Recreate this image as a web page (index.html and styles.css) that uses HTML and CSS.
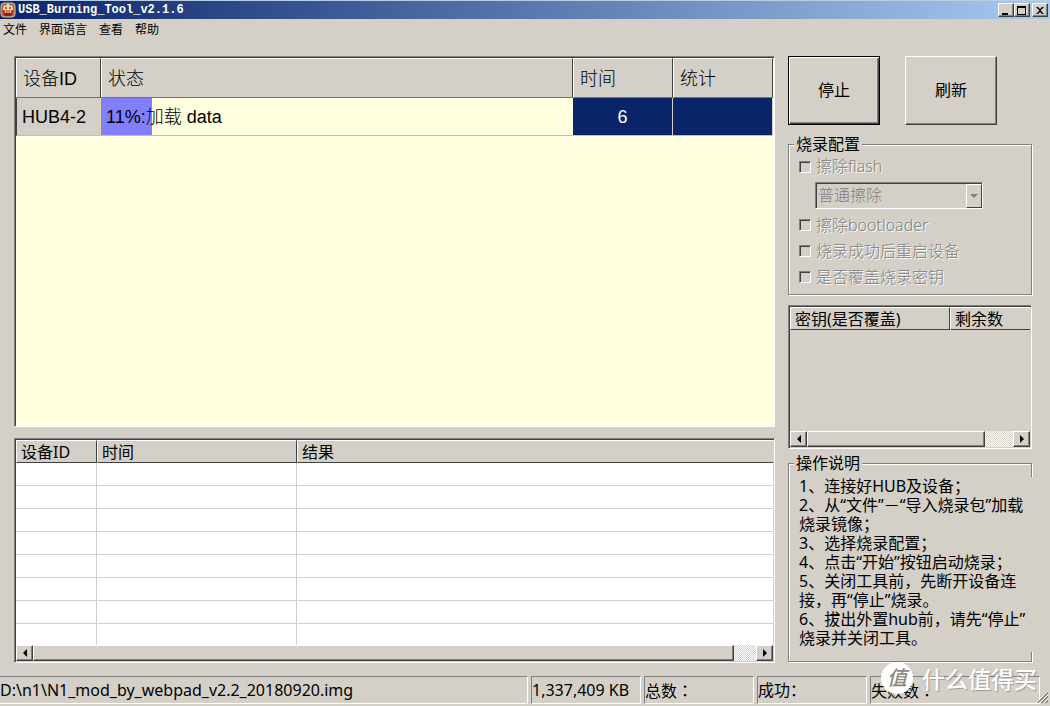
FILE: index.html
```html
<!DOCTYPE html>
<html lang="zh-CN">
<head>
<meta charset="utf-8">
<title>USB_Burning_Tool_v2.1.6</title>
<link rel="stylesheet" href="styles.css">
</head>
<body>
<header class="titlebar">
  <svg class="app-icon" viewBox="0 0 16 16" aria-hidden="true">
    <rect x="1" y="1" width="14" height="14" rx="3" fill="#a8683c" stroke="#d8c4a4"/>
    <path d="M3 6l1-3 2 1 1-2h2l1 2 2-1 1 3v3H3z" fill="#f3dcb4"/>
    <path d="M5 5h2v2H5zM9 5h2v2H9z" fill="#a8683c"/>
    <path d="M2 8h12l-1 3H3z" fill="#d8301c"/>
    <path d="M5 8l1 3M8 7v4M11 8l-1 3" stroke="#fbe6d0" stroke-width="1"/>
    <path d="M3 11h10l-2 3H5z" fill="#8a2414"/>
  </svg>
  <h1 class="title">USB_Burning_Tool_v2.1.6</h1>
  <div class="window-buttons">
    <button type="button" aria-label="最小化"><svg viewBox="0 0 12 11"><path d="M2 8h6v2H2z"/></svg></button>
    <button type="button" aria-label="最大化"><svg viewBox="0 0 12 11"><path fill-rule="evenodd" d="M1 1h9v9H1zM2 3v6h7V3z"/></svg></button>
    <button type="button" class="close" aria-label="关闭"><svg viewBox="0 0 12 11"><path d="M2 2h2l2 2 2-2h2L7 5v1l3 3H8L6 7 4 9H2l3-3V5z"/></svg></button>
  </div>
</header>
<nav class="menubar">
  <button type="button">文件</button>
  <button type="button">界面语言</button>
  <button type="button">查看</button>
  <button type="button">帮助</button>
</nav>
<main class="content">
  <div class="lists">
    <section class="devices">
      <table class="device-table">
        <colgroup><col class="c-id"><col><col class="c-num"><col class="c-num"></colgroup>
        <thead><tr><th>设备ID</th><th>状态</th><th>时间</th><th>统计</th></tr></thead>
        <tbody><tr>
          <th scope="row">HUB4-2</th>
          <td class="progress" style="--done: 10.7%">11%:加载 data</td>
          <td class="selected">6</td>
          <td class="selected"></td>
        </tr></tbody>
      </table>
    </section>
    <section class="results">
      <table class="result-table">
        <colgroup><col class="c-dev"><col class="c-time"><col></colgroup>
        <thead><tr><th>设备ID</th><th>时间</th><th>结果</th></tr></thead>
        <tbody>
          <tr><td></td><td></td><td></td></tr>
          <tr><td></td><td></td><td></td></tr>
          <tr><td></td><td></td><td></td></tr>
          <tr><td></td><td></td><td></td></tr>
          <tr><td></td><td></td><td></td></tr>
          <tr><td></td><td></td><td></td></tr>
          <tr><td></td><td></td><td></td></tr>
          <tr><td></td><td></td><td></td></tr>
        </tbody>
      </table>
      <div class="scrollbar">
        <button type="button" aria-label="向左"><svg viewBox="0 0 8 8"><path d="M6 0v8L2 4z"/></svg></button>
        <div class="thumb"></div><div class="track"></div>
        <button type="button" aria-label="向右"><svg viewBox="0 0 8 8"><path d="M2 0v8l4-4z"/></svg></button>
      </div>
    </section>
  </div>
  <aside class="side">
    <div class="actions">
      <button type="button" class="default">停止</button>
      <button type="button">刷新</button>
    </div>
    <fieldset class="group config">
      <legend>烧录配置</legend>
      <label class="check"><input type="checkbox" disabled>擦除flash</label>
      <div class="combo">
        <select aria-label="擦除方式" disabled><option>普通擦除</option></select>
        <span class="combo-arrow"><svg viewBox="0 0 8 4"><path d="M0 0h8L4 4z"/></svg></span>
      </div>
      <label class="check"><input type="checkbox" disabled>擦除bootloader</label>
      <label class="check"><input type="checkbox" disabled>烧录成功后重启设备</label>
      <label class="check"><input type="checkbox" disabled>是否覆盖烧录密钥</label>
    </fieldset>
    <section class="keys">
      <table class="key-table">
        <colgroup><col class="c-key"><col></colgroup>
        <thead><tr><th>密钥(是否覆盖)</th><th>剩余数</th></tr></thead>
      </table>
      <div class="scrollbar">
        <button type="button" aria-label="向左"><svg viewBox="0 0 8 8"><path d="M6 0v8L2 4z"/></svg></button>
        <div class="thumb"></div><div class="track"></div>
        <button type="button" aria-label="向右"><svg viewBox="0 0 8 8"><path d="M2 0v8l4-4z"/></svg></button>
      </div>
    </section>
    <fieldset class="group help">
      <legend>操作说明</legend>
      <div class="help-text">
        <p>1、连接好HUB及设备；</p>
        <p>2、从“文件”－“导入烧录包”加载<br>烧录镜像；</p>
        <p>3、选择烧录配置；</p>
        <p>4、点击“开始”按钮启动烧录；</p>
        <p>5、关闭工具前，先断开设备连<br>接，再“停止”烧录。</p>
        <p>6、拔出外置hub前，请先“停止”<br>烧录并关闭工具。</p>
      </div>
    </fieldset>
  </aside>
</main>
<footer class="statusbar">
  <span>D:\n1\N1_mod_by_webpad_v2.2_20180920.img</span>
  <span>1,337,409 KB</span>
  <span>总数<i class="colon" lang="zh-TW">：</i></span>
  <span>成功：</span>
  <span>失败数<i class="colon" lang="zh-TW">：</i></span>
  <svg class="grip" viewBox="0 0 12 12" aria-hidden="true"><path d="M1 12L12 1M5 12l7-7M9 12l3-3" stroke="#808080" stroke-width="2"/><path d="M0 12L12 0M4 12l8-8M8 12l4-4" stroke="#fff"/></svg>
</footer>
<div class="watermark"><span class="badge">值</span><span>什么值得买</span></div>
</body>
</html>
```
FILE: styles.css
```css
:root {
  --face: #d4d0c8;
  --shade: #808080;
  --dark: #404040;
  --light: #ffffff;
}
* { box-sizing: border-box; }
body {
  margin: 0;
  min-height: 100vh;
  display: flex;
  flex-direction: column;
  position: relative;
  overflow: hidden;
  background: var(--face);
  color: #000;
  font: 16px/19px "Noto Sans", "Noto Sans CJK SC", sans-serif;
}
button, select { font: inherit; color: inherit; background: var(--face); border-radius: 0; margin: 0; padding: 0; }
table { border-collapse: separate; border-spacing: 0; table-layout: fixed; width: 100%; }
th, td { font-weight: 400; text-align: left; padding: 0; white-space: nowrap; }
p { margin: 0; }

.titlebar {
  display: flex;
  align-items: center;
  height: 19px;
  padding: 0 2px 0 0;
  border-top: 1px solid #b8cce4;
  background: linear-gradient(90deg, #0a246a, #a6caf0);
}
.app-icon { width: 16px; height: 16px; }
.title { flex: 1; margin: 0 0 0 2px; color: #fff; font: bold 12px/18px "Liberation Mono", monospace; }
.window-buttons { display: flex; }
.window-buttons button {
  display: grid; place-items: center;
  width: 16px; height: 14px;
  border: 1px solid; border-color: #fff var(--dark) var(--dark) #fff;
  box-shadow: inset -1px -1px var(--shade);
}
.window-buttons .close { margin-left: 2px; }
.window-buttons svg { width: 12px; height: 11px; }

.menubar { display: flex; gap: 12px; padding: 1px 3px 0; height: 20px; }
.menubar button { border: 0; font-size: 12px; line-height: 19px; }

.content {
  flex: 1;
  display: grid;
  grid-template-columns: minmax(0, 1fr) 244px;
  gap: 13px;
  padding: 17px 18px 13px 14px;
}
.lists { display: flex; flex-direction: column; gap: 11px; }
.devices, .results, .keys {
  border: 1px solid; border-color: var(--shade) #fff #fff var(--shade);
  box-shadow: inset 1px 1px var(--dark);
  padding: 1px;
}
.devices { flex: 1; background: #ffffe0; }
.device-table { font: 18px/20px "Liberation Sans", "Noto Sans CJK SC", sans-serif; }
.device-table th, .device-table td { font-weight: 300; }
.device-table thead th {
  height: 40px; padding: 2px 0 0 6px;
  background: var(--face);
  border: 1px solid; border-color: #fff var(--dark) #807840 #fff;
}
.c-id { width: 85px; }
.c-num { width: 100px; }
.device-table tbody th, .device-table tbody td { height: 38px; padding-left: 5px; border-bottom: 1px solid #d0c860; }
.device-table tbody th { background: var(--face); border-right: 1px solid #e0d8a0; border-left: 1px solid var(--dark); }
.device-table .progress { background: linear-gradient(90deg, #8080ff var(--done), #ffffe0 var(--done)); }
.device-table .selected { background: #0a246a; color: #fff; text-align: center; padding: 0; border-right: 1px solid var(--face); font-weight: 400; }

.result-table thead th, .key-table thead th {
  height: 23px; padding: 1px 0 0 4px;
  background: var(--face);
  border: 1px solid; border-color: #fff var(--dark) var(--dark) #fff;
}
.result-table thead th { padding-top: 2px; }
.c-dev { width: 81px; }
.c-time { width: 200px; }
.result-table tbody { background: #fff; }
.result-table td { height: 23px; border: solid #d0d0d0; border-width: 0 1px 1px 0; }
.result-table tr:last-child td { height: 21px; border-bottom: 0; }
.result-table td:last-child, .result-table thead th:last-child { border-right: 0; }

.scrollbar { display: flex; height: 16px; }
.scrollbar button, .scrollbar .thumb {
  border: 1px solid; border-color: #fff var(--dark) var(--dark) #fff;
  box-shadow: inset -1px -1px var(--shade);
}
.scrollbar button { display: grid; place-items: center; flex: 0 0 17px; }
.scrollbar svg { width: 8px; height: 8px; }
.scrollbar .thumb { flex: 1; background: var(--face); }
.track { flex: 0 0 22px; background: repeating-conic-gradient(#fff 0 25%, var(--face) 0 50%) 0 0 / 2px 2px; }
.keys .track { flex-basis: 28px; }

.side { display: flex; flex-direction: column; }
.actions { display: flex; gap: 25px; height: 69px; }
.actions button {
  width: 92px;
  border: 1px solid; border-color: #fff var(--dark) var(--dark) #fff;
  box-shadow: inset -1px -1px var(--shade);
}
.actions .default { border-color: #000; box-shadow: inset 1px 1px #fff, inset -1px -1px var(--dark), inset -2px -2px var(--shade); }

.group {
  margin: 0; min-width: 0;
  border: 1px solid var(--shade);
  box-shadow: 1px 1px #fff, inset 1px 1px #fff;
}
.group legend { padding: 0 2px; background: var(--face); }
.config { margin-top: 10px; padding: 0 9px 4px 5px; }
.check {
  display: flex; align-items: center; gap: 5px;
  height: 26px; padding-left: 5px;
  color: var(--shade); text-shadow: 1px 1px #fff; font-weight: 300;
}
.config legend + .check { height: 25px; }
.check input {
  appearance: none; width: 12px; height: 12px; margin: 0;
  border: 1px solid; border-color: var(--shade) #fff #fff var(--shade);
  box-shadow: inset 1px 1px var(--dark);
}
.combo { position: relative; width: 168px; margin: 3px 0 3px 21px; }
.combo select {
  display: block; appearance: none; width: 100%; height: 27px; padding: 0 2px;
  border: 1px solid; border-color: var(--shade) #fff #fff var(--shade);
  box-shadow: inset 1px 1px var(--dark);
  color: var(--shade); opacity: 1; font-weight: 300;
}
.combo-arrow {
  position: absolute; top: 2px; right: 1px; bottom: 1px; width: 16px;
  display: grid; place-items: center;
  border: 1px solid; border-color: #fff var(--dark) var(--dark) #fff;
  pointer-events: none;
}
.combo-arrow svg { width: 8px; height: 4px; fill: var(--shade); }

.keys { display: flex; flex-direction: column; height: 144px; margin-top: 10px; }
.keys .scrollbar { margin-top: auto; }
.c-key { width: 160px; }
.key-table thead th:last-child { border-right: 0; }

.help { flex: 1; margin: 5px 0 1px; padding: 0 0 0 5px; }
.help-text { margin: 4px -2px 0 0; padding: 0 0 4px 5px; background: var(--face); white-space: nowrap; position: relative; }

.statusbar { display: flex; gap: 3px; height: 30px; padding: 0 10px 2px 0; position: relative; }
.statusbar span {
  flex: 0 0 110px; line-height: 27px; white-space: nowrap;
  border: 1px solid; border-color: var(--shade) #fff #fff var(--shade);
}
.statusbar span:first-child { flex: 1; border-left: 0; }
.statusbar span:nth-child(5) { flex-basis: 170px; }
.colon { font-family: "Noto Sans CJK TC", sans-serif; font-style: normal; }
.grip { position: absolute; right: 2px; bottom: 3px; width: 12px; height: 12px; }

.watermark {
  position: absolute; right: 13px; bottom: 12px;
  display: flex; align-items: center; gap: 9px;
  color: #fff; font: 500 23px/32px "Noto Sans CJK SC", sans-serif;
  text-shadow: 1px 1px 1px #999;
  pointer-events: none;
}
.badge { width: 32px; height: 32px; border-radius: 50%; background: #fff; color: #8c8880; text-align: center; font-size: 20px; line-height: 30px; font-style: italic; text-shadow: none; }
```
